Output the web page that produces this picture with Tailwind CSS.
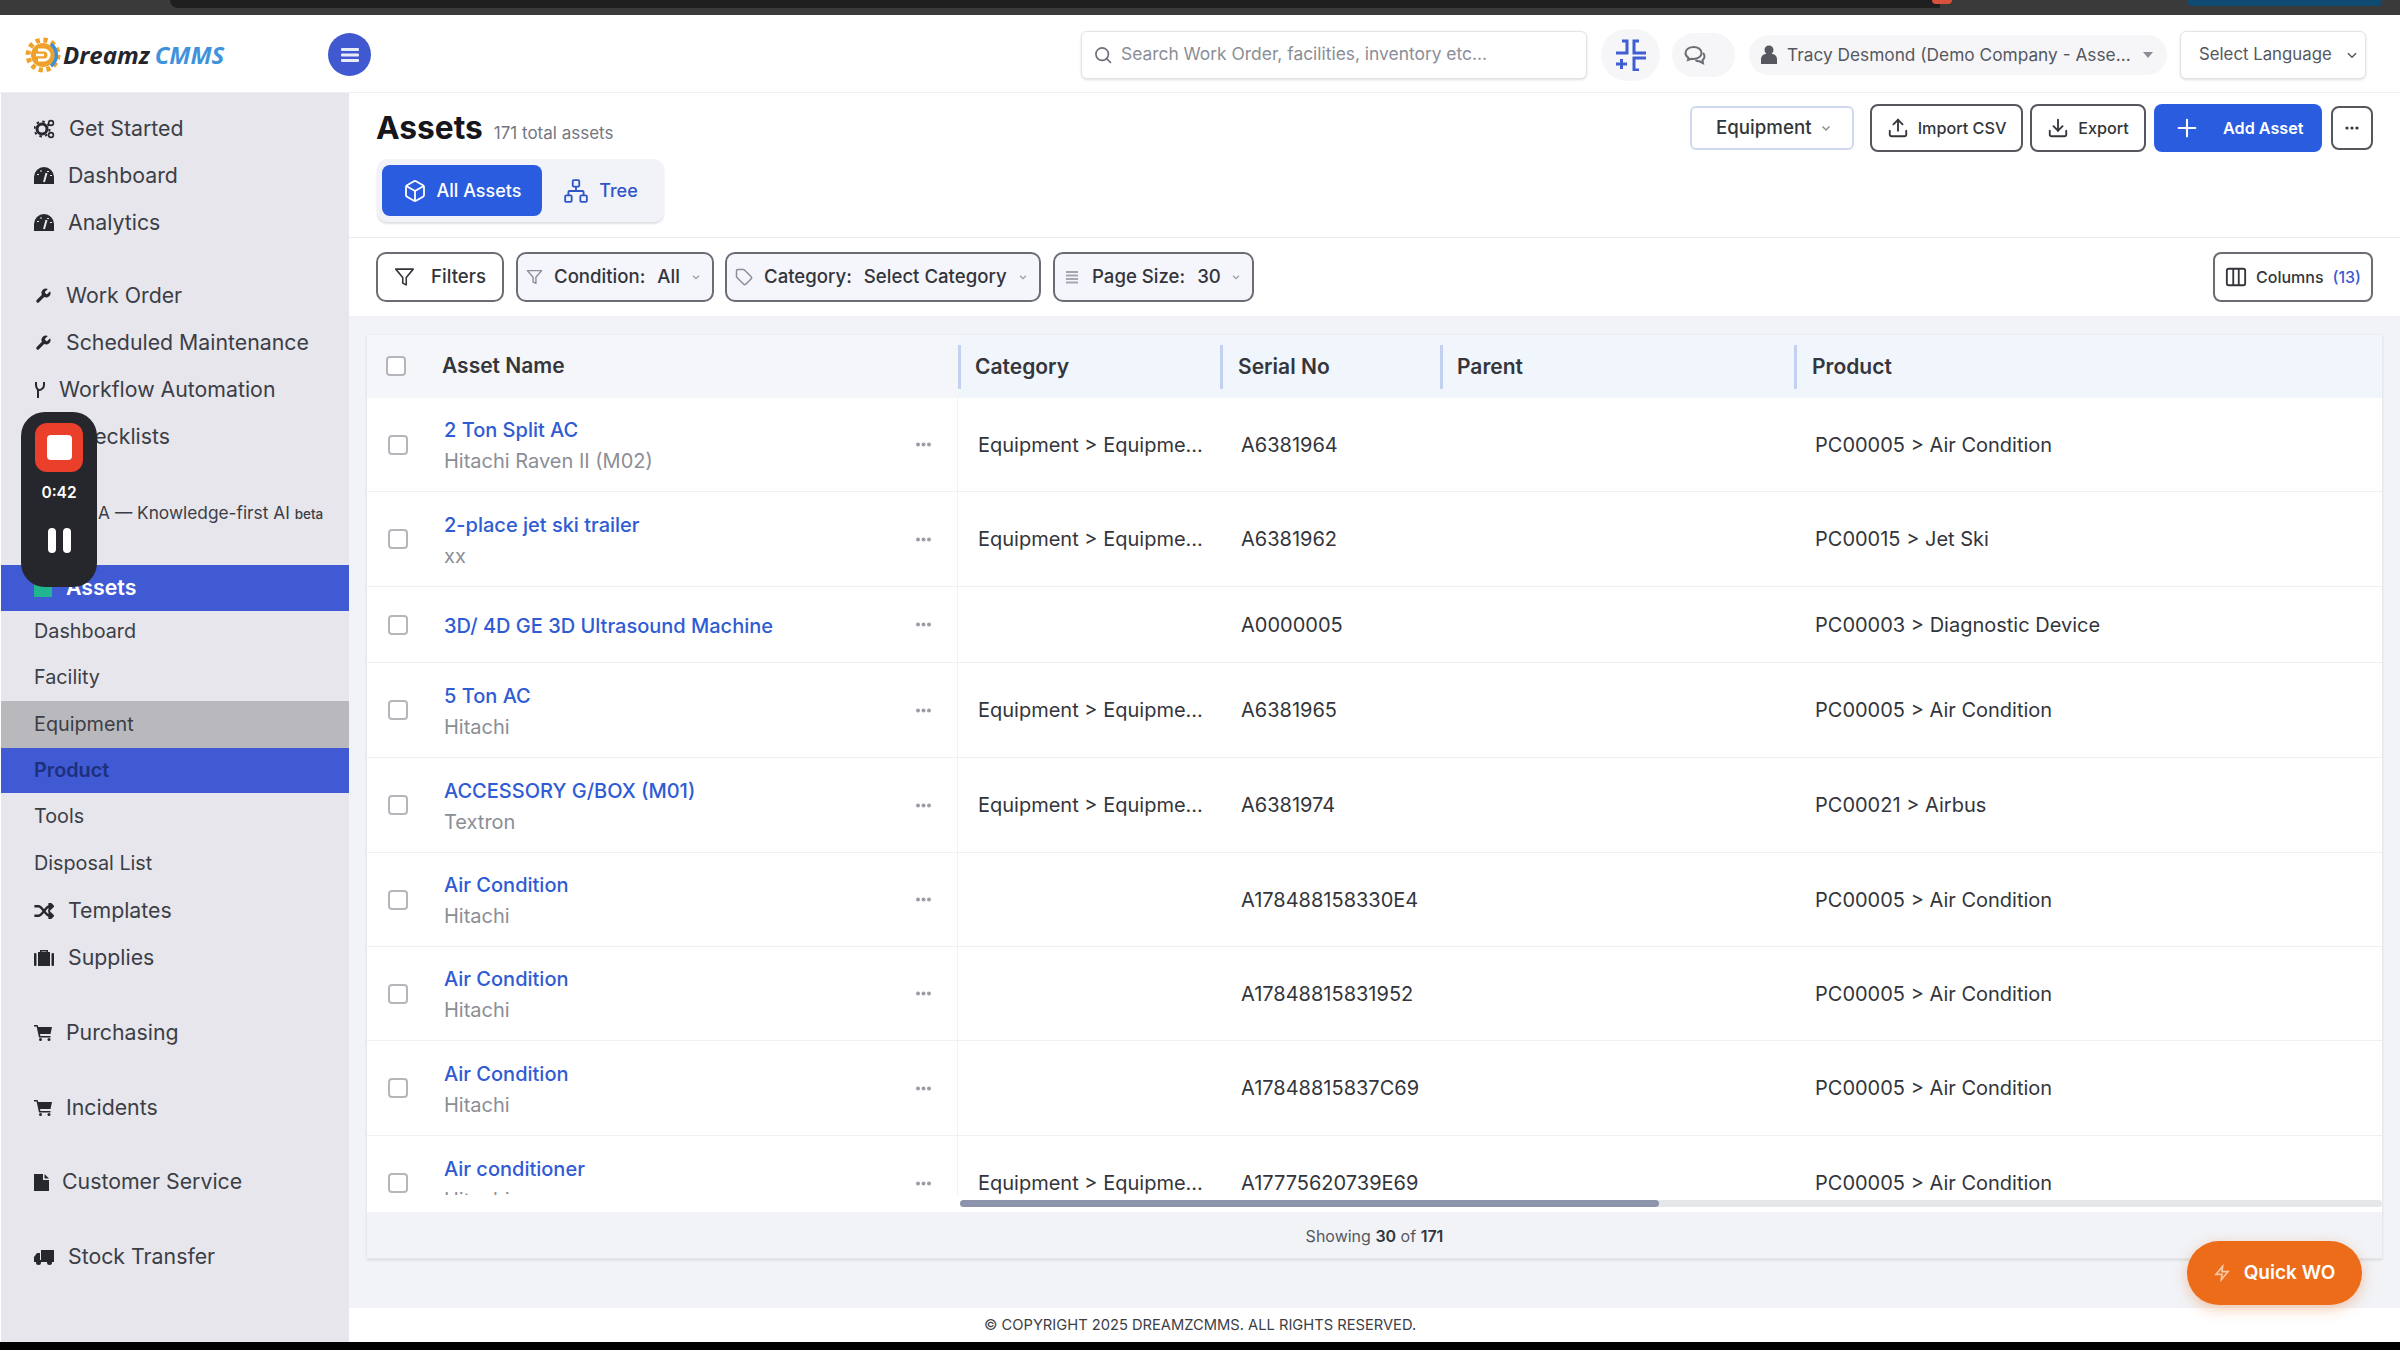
<!DOCTYPE html>
<html lang="en">
<head>
  <meta charset="UTF-8" />
  <title>Assets - DreamzCMMS</title>
  <script src="https://cdn.jsdelivr.net/npm/@tailwindcss/browser@4"></script>
</head>
<body class="w-[2400px] h-[1350px] overflow-hidden bg-white text-[#2b2d33] font-['Inter',sans-serif]">
<div class="relative w-[2400px] h-[1350px] flex flex-col overflow-hidden">

  <!-- window chrome strip from the recording -->
  <div class="relative h-[15px] shrink-0 bg-[#3a3a3a]">
    <div class="absolute left-[170px] top-0 w-[1770px] h-[8px] bg-[#1f1f1f] rounded-bl-[8px]"></div>
    <div class="absolute left-[1932px] top-0 w-[20px] h-[4px] bg-[#d9503f] rounded-b"></div>
    <div class="absolute left-[2188px] top-0 w-[194px] h-[6px] bg-[#0f4a73] rounded-b"></div>
  </div>

  <!-- header -->
  <header class="h-[78px] shrink-0 pt-[2px] flex items-center bg-white border-b border-[#f0f0f3]">
    <div class="w-[328px] pl-[24px] flex items-center">
      <svg width="38" height="38" viewBox="0 0 38 38" class="shrink-0">
        <circle cx="19" cy="19" r="15" fill="none" stroke="#efa22b" stroke-width="5" stroke-dasharray="4.2 3.65"/>
        <circle cx="19" cy="19" r="12" fill="#efa22b"/>
        <path d="M27 8 A14 14 0 0 1 27 30" fill="none" stroke="#3f8fd8" stroke-width="3.5"/>
        <path d="M14 14h6a5 5 0 0 1 0 10h-6" fill="none" stroke="#fff" stroke-width="3"/>
        <path d="M12 19h8" stroke="#fff" stroke-width="2.5"/>
      </svg>
      <span class="ml-[1px] font-['Open_Sans',sans-serif] italic font-bold text-[24px] leading-none text-[#23252b]">Dreamz</span>
      <span class="ml-[5px] font-['Open_Sans',sans-serif] italic font-bold text-[24px] leading-none text-[#3f93dc]">CMMS</span>
    </div>
    <button class="w-[43px] h-[43px] rounded-full bg-[#4059d0] flex items-center justify-center">
      <svg width="20" height="18" viewBox="0 0 20 18" fill="#e8ecfb"><rect x="1" y="2" width="18" height="3" rx="1"/><rect x="1" y="7.5" width="18" height="3" rx="1"/><rect x="1" y="13" width="18" height="3" rx="1"/></svg>
    </button>
    <div class="ml-auto pr-[34px] flex items-center">
      <div class="w-[506px] h-[48px] flex items-center gap-[8px] px-[11px] bg-white border border-[#e3e4e8] rounded-[6px] shadow-sm">
        <svg width="20" height="20" viewBox="0 0 24 24" fill="none" stroke="#6b6f78" stroke-width="2" stroke-linecap="round"><circle cx="11" cy="11" r="7.5"/><path d="m21 21-4.3-4.3"/></svg>
        <span class="text-[17.4px] text-[#8b8e96]">Search Work Order, facilities, inventory etc...</span>
      </div>
      <div class="ml-[14px] w-[59px] h-[52px] rounded-full bg-[#f6f6f8] flex items-center justify-center">
        <svg width="32" height="32" viewBox="0 0 32 32" fill="none" stroke="#3f5fd0" stroke-width="3"><path d="M1 14h11V2H7"/><path d="M31 14H19V2h5"/><path d="M1 25h11M6.500 20v10"/><path d="M31 19H19v12h5"/></svg>
      </div>
      <div class="ml-[12px] w-[63px] h-[44px] rounded-full bg-[#f6f6f8] flex items-center pl-[12px]">
        <svg width="22" height="20" viewBox="0 0 22 20" fill="none" stroke="#6b6e75" stroke-width="2"><path d="M9.500 2c-4.500 0-8 2.500-8 6 0 2 1.200 3.700 3 4.800L4 15l3.500-1.300c.7.100 1.300.2 2 .2 4.500 0 8-2.500 8-6s-3.500-6-8-6z"/><path d="M19 8c1 1 1.500 2.200 1.500 3.500 0 1.500-.8 2.700-2 3.600l.5 3-3.500-1.800c-1.500.1-3-.2-4-1"/></svg>
      </div>
      <div class="ml-[14px] w-[418px] h-[40px] rounded-full bg-[#f6f6f8] flex items-center pl-[11px] pr-[14px]">
        <svg width="18" height="20" viewBox="0 0 18 20" fill="#55585f" class="shrink-0"><circle cx="9" cy="5" r="4.5"/><path d="M1 19v-5a5 5 0 0 1 5-5h6a5 5 0 0 1 5 5v5z"/></svg>
        <span class="ml-[9px] text-[17.3px] text-[#55585f] whitespace-nowrap">Tracy Desmond (Demo Company - Asse...</span>
        <svg width="10" height="6" viewBox="0 0 10 6" fill="#8b8e96" class="ml-auto"><path d="M0 0h10L5 6z"/></svg>
      </div>
      <div class="ml-[13px] w-[186px] h-[48px] bg-white border border-[#e3e4e8] rounded-[6px] shadow-sm flex items-center pl-[18px] pr-[6px]">
        <span class="text-[16.8px] text-[#55585f] whitespace-nowrap">Select Language</span>
        <svg width="14" height="14" viewBox="0 0 24 24" fill="none" stroke="#55585f" stroke-width="2.5" class="ml-auto"><path d="m5 9 7 7 7-7"/></svg>
      </div>
    </div>
  </header>

  <div class="flex-1 flex min-h-0">
    <!-- sidebar -->
    <aside class="w-[349px] shrink-0 bg-[#e6e6ec] pt-[12px] text-[21.3px] text-[#3c3e46] border-l border-white">
      <a class="h-[47px] pl-[33px] flex items-center gap-[14px]">
        <svg width="21" height="20" viewBox="0 0 21 20"><circle cx="8" cy="10" r="5" fill="none" stroke="#26282e" stroke-width="3"/><circle cx="8" cy="10" r="7.5" fill="none" stroke="#26282e" stroke-width="2" stroke-dasharray="2.5 3.4"/><circle cx="17" cy="4" r="2.4" fill="none" stroke="#26282e" stroke-width="1.6"/><circle cx="17" cy="16" r="2.4" fill="none" stroke="#26282e" stroke-width="1.6"/></svg>
        <span>Get Started</span>
      </a>
      <a class="h-[47px] pl-[33px] flex items-center gap-[14px]">
        <svg width="20" height="18" viewBox="0 0 20 18"><path d="M0 17v-7a10 10 0 0 1 20 0v7z" fill="#26282e"/><path d="M10 15 12.5 6" stroke="#e6e6ec" stroke-width="2"/><path d="M4 7v1M7 3.500v1M14 4v1M17 8v1" stroke="#e6e6ec" stroke-width="2"/></svg>
        <span>Dashboard</span>
      </a>
      <a class="h-[47px] pl-[33px] flex items-center gap-[14px]">
        <svg width="20" height="18" viewBox="0 0 20 18"><path d="M0 17v-7a10 10 0 0 1 20 0v7z" fill="#26282e"/><path d="M10 15 12.5 6" stroke="#e6e6ec" stroke-width="2"/><path d="M4 7v1M7 3.500v1M14 4v1M17 8v1" stroke="#e6e6ec" stroke-width="2"/></svg>
        <span>Analytics</span>
      </a>

      <a class="mt-[26px] h-[47px] pl-[33px] flex items-center gap-[14px]">
        <svg width="18" height="18" viewBox="0 0 24 24" fill="#26282e"><path d="M14.7 6.3a1 1 0 0 0 0 1.4l1.6 1.6a1 1 0 0 0 1.4 0l3.77-3.77a6 6 0 0 1-7.94 7.94l-6.91 6.91a2.12 2.12 0 0 1-3-3l6.91-6.91a6 6 0 0 1 7.94-7.94l-3.76 3.76z"/></svg>
        <span>Work Order</span>
      </a>
      <a class="h-[47px] pl-[33px] flex items-center gap-[14px]">
        <svg width="18" height="18" viewBox="0 0 24 24" fill="#26282e"><path d="M14.7 6.3a1 1 0 0 0 0 1.4l1.6 1.6a1 1 0 0 0 1.4 0l3.77-3.77a6 6 0 0 1-7.94 7.94l-6.91 6.91a2.12 2.12 0 0 1-3-3l6.91-6.91a6 6 0 0 1 7.94-7.94l-3.76 3.76z"/></svg>
        <span>Scheduled Maintenance</span>
      </a>
      <a class="h-[47px] pl-[33px] flex items-center gap-[13px]">
        <svg width="12" height="18" viewBox="0 0 12 18" fill="none" stroke="#26282e" stroke-width="2"><path d="M2 1v3c0 3 2 5 3 5s5-1 5-5V1"/><path d="M4 8v9"/></svg>
        <span>Workflow Automation</span>
      </a>
      <a class="h-[47px] pl-[33px] flex items-center gap-[14px]">
        <svg width="18" height="18" viewBox="0 0 18 18" fill="#26282e"><rect x="1" y="1" width="16" height="16" rx="2"/></svg>
        <span>Checklists</span>
      </a>

      <a class="mt-[30px] h-[46px] pl-[80px] flex items-center whitespace-nowrap text-[17.3px]">
        <span>DIA — Knowledge-first AI <span class="text-[13.5px] font-medium">beta</span></span>
      </a>

      <a class="mt-[29px] h-[46px] pl-[33px] flex items-center gap-[14px] bg-[#3f5ad3] text-white font-semibold">
        <span class="w-[18px] h-[18px] bg-[#1fb58f]"></span>
        <span>Assets</span>
      </a>
      <a class="h-[44px] pb-[3px] pl-[33px] flex items-center text-[19.8px]">Dashboard</a>
      <a class="h-[46px] pl-[33px] flex items-center text-[19.8px]">Facility</a>
      <a class="h-[47px] pl-[33px] flex items-center text-[19.8px] bg-[#b9b9bd]">Equipment</a>
      <a class="h-[45px] pl-[33px] flex items-center text-[19.8px] bg-[#3f5ad3] text-[#1e2f7c] font-semibold">Product</a>
      <a class="h-[48px] pl-[33px] flex items-center text-[19.8px]">Tools</a>
      <a class="h-[46px] pl-[33px] flex items-center text-[19.8px]">Disposal List</a>

      <a class="mt-[1px] h-[46px] pl-[33px] flex items-center gap-[14px]">
        <svg width="20" height="16" viewBox="0 0 24 20" fill="none" stroke="#26282e" stroke-width="3"><path d="M0 4h5c5 0 9 12 14 12h3"/><path d="M0 16h5c5 0 9-12 14-12h3"/><path d="m19 0 4 4-4 4z" fill="#26282e"/><path d="m19 12 4 4-4 4z" fill="#26282e"/></svg>
        <span>Templates</span>
      </a>
      <a class="h-[47px] pl-[33px] flex items-center gap-[14px]">
        <svg width="20" height="17" viewBox="0 0 20 17" fill="#26282e"><path d="M6 3V1h8v2h-1.500V2.500h-5V3z"/><rect x="0" y="4" width="2.5" height="13" rx="1"/><rect x="4" y="3" width="12" height="14"/><rect x="17.5" y="4" width="2.5" height="13" rx="1"/></svg>
        <span>Supplies</span>
      </a>

      <a class="mt-[29px] h-[46px] pl-[33px] flex items-center gap-[14px]">
        <svg width="18" height="16" viewBox="0 0 18 16" fill="#26282e"><path d="M0 0h3.500l.8 2H18l-1.500 7H6l.4 2h10.100v1.500H5L2.600 1.500H0z"/><circle cx="6.5" cy="14.5" r="1.5"/><circle cx="15" cy="14.5" r="1.5"/></svg>
        <span>Purchasing</span>
      </a>
      <a class="mt-[29px] h-[46px] pl-[33px] flex items-center gap-[14px]">
        <svg width="18" height="16" viewBox="0 0 18 16" fill="#26282e"><path d="M0 0h3.500l.8 2H18l-1.500 7H6l.4 2h10.100v1.500H5L2.600 1.500H0z"/><circle cx="6.5" cy="14.5" r="1.5"/><circle cx="15" cy="14.5" r="1.5"/></svg>
        <span>Incidents</span>
      </a>
      <a class="mt-[28px] h-[46px] pl-[33px] flex items-center gap-[13px]">
        <svg width="15" height="17" viewBox="0 0 15 17" fill="#26282e"><path d="M0 0h9v6h6v11H0z"/><path d="M10.500 0 15 4.500h-4.500z"/></svg>
        <span>Customer Service</span>
      </a>
      <a class="mt-[29px] h-[46px] pl-[33px] flex items-center gap-[14px]">
        <svg width="20" height="16" viewBox="0 0 20 16" fill="#26282e"><path d="M7 1h13v11H7zM0 8l3-4h3v8H0z"/><rect y="11" width="20" height="2"/><circle cx="4.5" cy="13.5" r="2.5"/><circle cx="15.5" cy="13.5" r="2.5"/></svg>
        <span>Stock Transfer</span>
      </a>
    </aside>

    <!-- main -->
    <main class="flex-1 min-w-0 flex flex-col bg-white">
      <section class="h-[145px] shrink-0 pl-[27px] pr-[27px] pt-[11px] border-b border-[#e9eaee]">
        <div class="flex items-center justify-between h-[48px]">
          <div class="flex items-baseline gap-[11px]">
            <h1 class="text-[31.7px] font-bold text-[#15171c]">Assets</h1>
            <span class="text-[17px] text-[#74777f]">171 total assets</span>
          </div>
          <div class="flex items-center text-[16.2px] font-medium text-[#33353b]">
            <button class="w-[164px] h-[44px] pl-[24px] pr-[20px] flex items-center justify-between bg-white border-2 border-[#cfd8ee] rounded-[6px] text-[18.7px]">
              Equipment
              <svg width="12" height="12" viewBox="0 0 24 24" fill="none" stroke="#8b8e96" stroke-width="3"><path d="m5 9 7 7 7-7"/></svg>
            </button>
            <button class="ml-[16px] w-[153px] h-[48px] flex items-center justify-center gap-[9px] bg-white border-2 border-[#55575c] rounded-[8px]">
              <svg width="22" height="22" viewBox="0 0 24 24" fill="none" stroke="#33353b" stroke-width="2" stroke-linecap="round"><path d="M21 15v4a2 2 0 0 1-2 2H5a2 2 0 0 1-2-2v-4"/><path d="M17 8l-5-5-5 5"/><path d="M12 3v12"/></svg>
              Import CSV
            </button>
            <button class="ml-[7px] w-[116px] h-[48px] flex items-center justify-center gap-[9px] bg-white border-2 border-[#55575c] rounded-[8px]">
              <svg width="22" height="22" viewBox="0 0 24 24" fill="none" stroke="#33353b" stroke-width="2" stroke-linecap="round"><path d="M21 15v4a2 2 0 0 1-2 2H5a2 2 0 0 1-2-2v-4"/><path d="m7 10 5 5 5-5"/><path d="M12 15V3"/></svg>
              Export
            </button>
            <button class="ml-[8px] w-[168px] h-[48px] flex items-center pl-[23px] gap-[26px] bg-[#2a5ce0] rounded-[8px] text-white font-semibold">
              <svg width="20" height="20" viewBox="0 0 24 24" fill="none" stroke="#fff" stroke-width="2.5" stroke-linecap="round"><path d="M12 2v20M2 12h20"/></svg>
              Add Asset
            </button>
            <button class="ml-[9px] w-[42px] h-[44px] flex items-center justify-center bg-white border-2 border-[#55575c] rounded-[8px]">
              <svg width="14" height="4" viewBox="0 0 14 4" fill="#33353b"><circle cx="2" cy="2" r="1.6"/><circle cx="7" cy="2" r="1.6"/><circle cx="12" cy="2" r="1.6"/></svg>
            </button>
          </div>
        </div>
        <div class="mt-[7px] ml-[1px] w-[287px] h-[63px] p-[5px] bg-[#f1f3f9] rounded-[10px] shadow-[0_2px_2px_rgba(0,0,0,0.12)] flex items-center text-[18px] font-medium">
          <button class="w-[160px] h-[51px] flex items-center justify-center gap-[10px] bg-[#2a5ce0] rounded-[8px] text-white">
            <svg width="24" height="24" viewBox="0 0 24 24" fill="none" stroke="#fff" stroke-width="1.8"><path d="M21 8a2 2 0 0 0-1-1.730l-7-4a2 2 0 0 0-2 0l-7 4A2 2 0 0 0 3 8v8a2 2 0 0 0 1 1.730l7 4a2 2 0 0 0 2 0l7-4A2 2 0 0 0 21 16Z"/><path d="m3.300 7 8.700 5 8.700-5"/><path d="M12 22V12"/></svg>
            All Assets
          </button>
          <button class="flex-1 h-[51px] flex items-center justify-center gap-[10px] text-[#2f55c8]">
            <svg width="26" height="26" viewBox="0 0 24 24" fill="none" stroke="#2f55c8" stroke-width="1.7"><rect x="16" y="16" width="6" height="6" rx="1"/><rect x="2" y="16" width="6" height="6" rx="1"/><rect x="9" y="2" width="6" height="6" rx="1"/><path d="M5 16v-3a1 1 0 0 1 1-1h12a1 1 0 0 1 1 1v3"/><path d="M12 12V8"/></svg>
            Tree
          </button>
        </div>
      </section>

      <section class="h-[79px] shrink-0 pl-[27px] pr-[27px] flex items-center text-[18.6px] font-medium text-[#33353b] border-b border-[#eef0f4]">
        <button class="w-[128px] h-[50px] flex items-center justify-center gap-[16px] bg-white border-2 border-[#6a6d73] rounded-[10px]">
          <svg width="21" height="22" viewBox="0 0 24 24" fill="none" stroke="#33353b" stroke-width="1.8" stroke-linejoin="round"><path d="M22 3H2l8 9.460V19l4 2v-8.540z"/></svg>
          Filters
        </button>
        <button class="ml-[12px] w-[198px] h-[50px] pl-[8px] pr-[11px] flex items-center bg-[#f5f6fc] border-2 border-[#6a6d73] rounded-[10px]">
          <svg width="17" height="18" viewBox="0 0 24 24" fill="none" stroke="#8b8e96" stroke-width="2" stroke-linejoin="round"><path d="M22 3H2l8 9.460V19l4 2v-8.540z"/></svg>
          <span class="ml-[11px]">Condition:</span><span class="ml-[12px]">All</span>
          <svg width="10" height="10" viewBox="0 0 24 24" fill="none" stroke="#9a9da5" stroke-width="3" class="ml-auto"><path d="m5 9 7 7 7-7"/></svg>
        </button>
        <button class="ml-[11px] w-[316px] h-[50px] pl-[8px] pr-[11px] flex items-center bg-[#f5f6fc] border-2 border-[#6a6d73] rounded-[10px]">
          <svg width="18" height="18" viewBox="0 0 24 24" fill="none" stroke="#8b8e96" stroke-width="2"><path d="M12.590 2.590A2 2 0 0 0 11.170 2H4a2 2 0 0 0-2 2v7.170a2 2 0 0 0 .590 1.410l8.700 8.700a2.430 2.430 0 0 0 3.420 0l6.580-6.580a2.430 2.430 0 0 0 0-3.420z"/></svg>
          <span class="ml-[11px]">Category:</span><span class="ml-[12px]">Select Category</span>
          <svg width="10" height="10" viewBox="0 0 24 24" fill="none" stroke="#9a9da5" stroke-width="3" class="ml-auto"><path d="m5 9 7 7 7-7"/></svg>
        </button>
        <button class="ml-[12px] w-[201px] h-[50px] pl-[10px] pr-[11px] flex items-center bg-[#f5f6fc] border-2 border-[#6a6d73] rounded-[10px]">
          <svg width="14" height="16" viewBox="0 0 14 16" fill="#a4a7ae"><rect x="1" y="2" width="12" height="2"/><rect x="1" y="5.5" width="12" height="2"/><rect x="1" y="9" width="12" height="2"/><rect x="1" y="12.5" width="12" height="2"/></svg>
          <span class="ml-[13px]">Page Size:</span><span class="ml-[12px]">30</span>
          <svg width="10" height="10" viewBox="0 0 24 24" fill="none" stroke="#9a9da5" stroke-width="3" class="ml-auto"><path d="m5 9 7 7 7-7"/></svg>
        </button>
        <button class="ml-auto w-[160px] h-[50px] flex items-center justify-center gap-[9px] bg-white border-2 border-[#6a6d73] rounded-[8px] text-[16px]">
          <svg width="22" height="22" viewBox="0 0 24 24" fill="none" stroke="#33353b" stroke-width="2"><rect x="2" y="3" width="20" height="18" rx="2"/><path d="M9 3v18M15 3v18"/></svg>
          Columns <span class="text-[#3f5ad3]">(13)</span>
        </button>
      </section>

      <section class="flex-1 min-h-0 bg-[#f1f3f7] pt-[18px] pl-[18px] pr-[18px]">
        <div class="w-[2015px] bg-white shadow-[0_1px_3px_rgba(0,0,0,0.12)]">
          <div class="grid grid-cols-[591px_262px_220px_354px_588px] h-[63px] pb-[2px] items-center text-[21px] font-semibold text-[#34363c] bg-[#f1f5fc]">
            <div class="h-[63px] pb-[2px] pl-[19px] flex items-center bg-[#f4f6f9]">
              <span class="w-[20px] h-[20px] border-2 border-[#b4b6bb] rounded-[4px] bg-white"></span>
              <span class="ml-[36px]">Asset Name</span>
            </div>
            <div class="h-[44px] pl-[14px] flex items-center border-l-[3px] border-[#c3d0ef]">Category</div>
            <div class="h-[44px] pl-[15px] flex items-center border-l-[3px] border-[#c3d0ef]">Serial No</div>
            <div class="h-[44px] pl-[14px] flex items-center border-l-[3px] border-[#c3d0ef]">Parent</div>
            <div class="h-[44px] pl-[15px] flex items-center border-l-[3px] border-[#c3d0ef]">Product</div>
          </div>
          <div id="rows" class="h-[797px] overflow-hidden"></div>
          <div class="h-[17px] pt-[5px] pl-[593px]">
            <div class="h-[7px] bg-[#e5e7eb] rounded-full">
              <div class="w-[699px] h-[7px] bg-[#8d93ab] rounded-full"></div>
            </div>
          </div>
          <div class="h-[47px] pt-[2px] bg-[#f1f3f7] border-b border-[#e4e6ea] flex items-center justify-center text-[16px] text-[#55585f]">
            <span>Showing <b class="font-semibold text-[#33353b]">30</b> of <b class="font-semibold text-[#33353b]">171</b></span>
          </div>
        </div>
      </section>

      <footer class="h-[34px] shrink-0 bg-white flex items-center pl-[635px] text-[14.7px] text-[#3c3e46]">© COPYRIGHT 2025 DREAMZCMMS. ALL RIGHTS RESERVED.</footer>
    </main>
  </div>

  <div class="h-[8px] shrink-0 bg-black"></div>

  <!-- recorder widget -->
  <div class="absolute left-[21px] top-[412px] w-[76px] h-[175px] bg-[#26272c] rounded-[24px] flex flex-col items-center pt-[11px]">
    <div class="w-[48px] h-[49px] rounded-[12px] bg-[#ea3f2b] flex items-center justify-center">
      <div class="w-[25px] h-[25px] rounded-[4px] bg-white"></div>
    </div>
    <div class="mt-[12px] text-[15.5px] font-semibold leading-[18px] text-white">0:42</div>
    <div class="mt-[26px] flex gap-[7px]">
      <div class="w-[8px] h-[25px] rounded-full bg-white"></div>
      <div class="w-[8px] h-[25px] rounded-full bg-white"></div>
    </div>
  </div>

  <!-- quick work order -->
  <button class="absolute left-[2187px] top-[1241px] w-[175px] h-[64px] rounded-full bg-[#ec6c1a] shadow-[0_4px_14px_rgba(236,108,26,0.35)] flex items-center justify-center gap-[14px] text-white text-[19px] font-semibold">
    <svg width="16" height="18" viewBox="0 0 24 24" fill="none" stroke="#f8c9a8" stroke-width="2.5"><path d="M13 2 3 14h9l-1 8 10-12h-9z"/></svg>
    Quick WO
  </button>
</div>

<script>
  const rows = [
    { h: 'h-[94px]', name: '2 Ton Split AC', sub: 'Hitachi Raven II (M02)', cat: 'Equipment > Equipme...', serial: 'A6381964', product: 'PC00005 > Air Condition' },
    { h: 'h-[95px]', name: '2-place jet ski trailer', sub: 'xx', cat: 'Equipment > Equipme...', serial: 'A6381962', product: 'PC00015 > Jet Ski' },
    { h: 'h-[76px]', name: '3D/ 4D GE 3D Ultrasound Machine', sub: '', cat: '', serial: 'A0000005', product: 'PC00003 > Diagnostic Device' },
    { h: 'h-[95px]', name: '5 Ton AC', sub: 'Hitachi', cat: 'Equipment > Equipme...', serial: 'A6381965', product: 'PC00005 > Air Condition' },
    { h: 'h-[95px]', name: 'ACCESSORY G/BOX (M01)', sub: 'Textron', cat: 'Equipment > Equipme...', serial: 'A6381974', product: 'PC00021 > Airbus' },
    { h: 'h-[94px]', name: 'Air Condition', sub: 'Hitachi', cat: '', serial: 'A178488158330E4', product: 'PC00005 > Air Condition' },
    { h: 'h-[94px]', name: 'Air Condition', sub: 'Hitachi', cat: '', serial: 'A17848815831952', product: 'PC00005 > Air Condition' },
    { h: 'h-[95px]', name: 'Air Condition', sub: 'Hitachi', cat: '', serial: 'A17848815837C69', product: 'PC00005 > Air Condition' },
    { h: 'h-[95px]', name: 'Air conditioner', sub: 'Hitachi', cat: 'Equipment > Equipme...', serial: 'A17775620739E69', product: 'PC00005 > Air Condition' },
  ];

  document.getElementById('rows').innerHTML = rows.map(r => `
    <div class="${r.h} grid grid-cols-[591px_262px_220px_354px_588px] items-center border-b border-[#eef0f3] text-[20px] text-[#33353b]">
      <div class="h-full pl-[21px] pr-[26px] flex items-center border-r border-[#f1f2f5]">
        <span class="w-[20px] h-[20px] shrink-0 border-2 border-[#b4b6bb] rounded-[4px] bg-white"></span>
        <div class="ml-[36px] pt-[2px] flex flex-col gap-[7px]">
          <span class="text-[#2f5bd4] font-medium leading-[24px]">${r.name}</span>
          ${r.sub ? `<span class="text-[#8b8e96] leading-[24px]">${r.sub}</span>` : ''}
        </div>
        <svg width="15" height="5" viewBox="0 0 15 5" fill="#9a9da5" class="ml-auto"><circle cx="2" cy="2.5" r="2"/><circle cx="7.5" cy="2.5" r="2"/><circle cx="13" cy="2.5" r="2"/></svg>
      </div>
      <div class="pl-[20px]">${r.cat}</div>
      <div class="pl-[21px]">${r.serial}</div>
      <div></div>
      <div class="pl-[21px]">${r.product}</div>
    </div>
  `).join('');
</script>
</body>
</html>
